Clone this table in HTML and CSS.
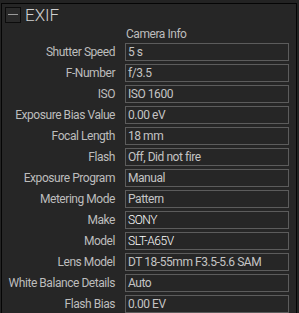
FILE: index.html
```html
<!DOCTYPE html>
<html>
<head>
  <meta charset="UTF-8">
  <title>EXIF</title>
  <link rel="stylesheet" href="styles.css">
</head>
<body>

  <div class="panel">
    <div class="panel-head">
      <span class="toggle"><span class="dash"></span></span>
      <span class="panel-title">EXIF</span>
    </div>

    <div class="section">Camera Info</div>

    <div class="fields">
      <label>Shutter Speed</label><div class="value">5 s</div>
      <label>F-Number</label><div class="value">f/3.5</div>
      <label>ISO</label><div class="value">ISO 1600</div>
      <label>Exposure Bias Value</label><div class="value">0.00 eV</div>
      <label>Focal Length</label><div class="value">18 mm</div>
      <label>Flash</label><div class="value">Off, Did not fire</div>
      <label>Exposure Program</label><div class="value">Manual</div>
      <label>Metering Mode</label><div class="value">Pattern</div>
      <label>Make</label><div class="value strong">SONY</div>
      <label>Model</label><div class="value strong">SLT-A65V</div>
      <label>Lens Model</label><div class="value">DT 18-55mm F3.5-5.6 SAM</div>
      <label>White Balance Details</label><div class="value">Auto</div>
      <label>Flash Bias</label><div class="value">0.00 EV</div>
    </div>
  </div>

</body>
</html>
```

FILE: styles.css
```css
body {
  margin: 0;
  background: #232323;
  font-family: Roboto, "Liberation Sans", sans-serif;
  font-size: 12px;
  letter-spacing: -0.45px;
  color: #bdbdbd;
  height: 313px;
  overflow: hidden;
}
.panel {
  margin: 3px 0 0 1px;
  width: 294px;
  height: 320px;
  background: #262626;
  border: 1px solid #050505;
  border-bottom: none;
}
.panel-head {
  display: flex;
  align-items: center;
  height: 19px;
  padding: 1px 0 0 3px;
}
.toggle {
  width: 14px;
  height: 14px;
  border: 1px solid #0c0c0c;
  background: #2a2a2a;
  display: flex;
  align-items: center;
  justify-content: center;
}
.dash {
  width: 10px;
  height: 1px;
  background: #9a9a9a;
}
.panel-title {
  margin-left: 4px;
  font-size: 17px;
  font-weight: 300;
  letter-spacing: 0;
  color: #d0d0d0;
}
.section {
  height: 18px;
  line-height: 18px;
  padding-left: 124px;
  margin-top: 1px;
}
.fields {
  display: grid;
  grid-template-columns: 113px 164px;
  column-gap: 10px;
  row-gap: 3px;
}
.fields label {
  text-align: right;
  line-height: 18px;
  white-space: nowrap;
}
.value {
  height: 16px;
  line-height: 16px;
  border: 1px solid #5c5c5c;
  padding-left: 2px;
  color: #c4c4c4;
  white-space: nowrap;
  overflow: hidden;
}
.value.strong {
  color: #ffffff;
  font-weight: 300;
}
```
